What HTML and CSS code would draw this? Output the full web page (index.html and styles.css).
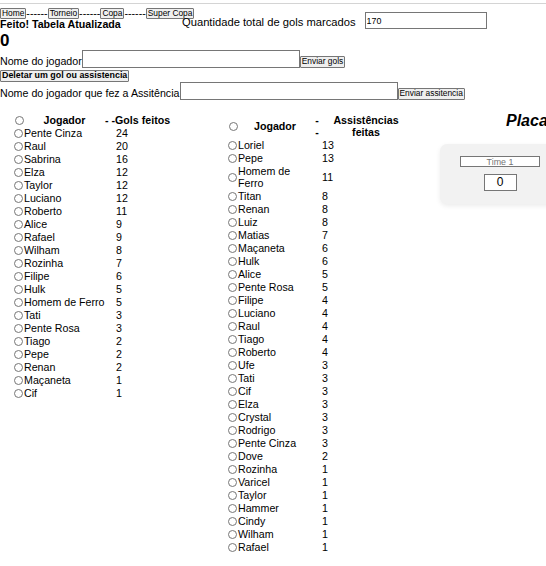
FILE: index.html
```html
<!DOCTYPE html>
<html lang="pt-BR">
<head>
<meta charset="utf-8">
<title>Tabela</title>
<link rel="stylesheet" href="styles.css">
</head>
<body>
<div class="topline"></div>
<header class="head">
  <nav class="nav"><button class="btn">Home</button>------<button class="btn">Torneio</button>------<button class="btn">Copa</button>------<button class="btn">Super Copa</button></nav>
  <div class="total"><label class="total-label">Quantidade total de gols marcados</label><input class="total-input" value="170"></div>
  <p class="status">Feito! Tabela Atualizada</p>
  <h2 class="zero">0</h2>
</header>

<div class="field"><label class="field-label">Nome do jogador</label><input class="field-input"><button class="btn">Enviar gols</button></div>
<button class="btn btn-delete">Deletar um gol ou assistencia</button>
<div class="field field-tight"><label class="field-label">Nome do jogador que fez a Assitência</label><input class="field-input"><button class="btn">Enviar assitencia</button></div>

<main class="boards">
  <table class="board board-gols">
    <thead>
      <tr><th class="c-r"><input type="radio" class="radio" name="g"></th><th class="c-n">Jogador</th><th class="c-v">- -Gols feitos</th></tr>
    </thead>
    <tbody>
      <tr><td class="c-r"><input type="radio" class="radio" name="g"></td><td class="c-n">Pente Cinza</td><td class="c-v">24</td></tr>
      <tr><td class="c-r"><input type="radio" class="radio" name="g"></td><td class="c-n">Raul</td><td class="c-v">20</td></tr>
      <tr><td class="c-r"><input type="radio" class="radio" name="g"></td><td class="c-n">Sabrina</td><td class="c-v">16</td></tr>
      <tr><td class="c-r"><input type="radio" class="radio" name="g"></td><td class="c-n">Elza</td><td class="c-v">12</td></tr>
      <tr><td class="c-r"><input type="radio" class="radio" name="g"></td><td class="c-n">Taylor</td><td class="c-v">12</td></tr>
      <tr><td class="c-r"><input type="radio" class="radio" name="g"></td><td class="c-n">Luciano</td><td class="c-v">12</td></tr>
      <tr><td class="c-r"><input type="radio" class="radio" name="g"></td><td class="c-n">Roberto</td><td class="c-v">11</td></tr>
      <tr><td class="c-r"><input type="radio" class="radio" name="g"></td><td class="c-n">Alice</td><td class="c-v">9</td></tr>
      <tr><td class="c-r"><input type="radio" class="radio" name="g"></td><td class="c-n">Rafael</td><td class="c-v">9</td></tr>
      <tr><td class="c-r"><input type="radio" class="radio" name="g"></td><td class="c-n">Wilham</td><td class="c-v">8</td></tr>
      <tr><td class="c-r"><input type="radio" class="radio" name="g"></td><td class="c-n">Rozinha</td><td class="c-v">7</td></tr>
      <tr><td class="c-r"><input type="radio" class="radio" name="g"></td><td class="c-n">Filipe</td><td class="c-v">6</td></tr>
      <tr><td class="c-r"><input type="radio" class="radio" name="g"></td><td class="c-n">Hulk</td><td class="c-v">5</td></tr>
      <tr><td class="c-r"><input type="radio" class="radio" name="g"></td><td class="c-n">Homem de Ferro</td><td class="c-v">5</td></tr>
      <tr><td class="c-r"><input type="radio" class="radio" name="g"></td><td class="c-n">Tati</td><td class="c-v">3</td></tr>
      <tr><td class="c-r"><input type="radio" class="radio" name="g"></td><td class="c-n">Pente Rosa</td><td class="c-v">3</td></tr>
      <tr><td class="c-r"><input type="radio" class="radio" name="g"></td><td class="c-n">Tiago</td><td class="c-v">2</td></tr>
      <tr><td class="c-r"><input type="radio" class="radio" name="g"></td><td class="c-n">Pepe</td><td class="c-v">2</td></tr>
      <tr><td class="c-r"><input type="radio" class="radio" name="g"></td><td class="c-n">Renan</td><td class="c-v">2</td></tr>
      <tr><td class="c-r"><input type="radio" class="radio" name="g"></td><td class="c-n">Maçaneta</td><td class="c-v">1</td></tr>
      <tr><td class="c-r"><input type="radio" class="radio" name="g"></td><td class="c-n">Cif</td><td class="c-v">1</td></tr>
    </tbody>
  </table>

  <table class="board board-assist">
    <thead>
      <tr><th class="c-r"><input type="radio" class="radio" name="a"></th><th class="c-n">Jogador</th><th class="c-d">- -</th><th class="c-v">Assistências feitas</th></tr>
    </thead>
    <tbody>
      <tr><td class="c-r"><input type="radio" class="radio" name="a"></td><td class="c-n">Loriel</td><td class="c-d"></td><td class="c-v">13</td></tr>
      <tr><td class="c-r"><input type="radio" class="radio" name="a"></td><td class="c-n">Pepe</td><td class="c-d"></td><td class="c-v">13</td></tr>
      <tr><td class="c-r"><input type="radio" class="radio" name="a"></td><td class="c-n">Homem de Ferro</td><td class="c-d"></td><td class="c-v">11</td></tr>
      <tr><td class="c-r"><input type="radio" class="radio" name="a"></td><td class="c-n">Titan</td><td class="c-d"></td><td class="c-v">8</td></tr>
      <tr><td class="c-r"><input type="radio" class="radio" name="a"></td><td class="c-n">Renan</td><td class="c-d"></td><td class="c-v">8</td></tr>
      <tr><td class="c-r"><input type="radio" class="radio" name="a"></td><td class="c-n">Luiz</td><td class="c-d"></td><td class="c-v">8</td></tr>
      <tr><td class="c-r"><input type="radio" class="radio" name="a"></td><td class="c-n">Matias</td><td class="c-d"></td><td class="c-v">7</td></tr>
      <tr><td class="c-r"><input type="radio" class="radio" name="a"></td><td class="c-n">Maçaneta</td><td class="c-d"></td><td class="c-v">6</td></tr>
      <tr><td class="c-r"><input type="radio" class="radio" name="a"></td><td class="c-n">Hulk</td><td class="c-d"></td><td class="c-v">6</td></tr>
      <tr><td class="c-r"><input type="radio" class="radio" name="a"></td><td class="c-n">Alice</td><td class="c-d"></td><td class="c-v">5</td></tr>
      <tr><td class="c-r"><input type="radio" class="radio" name="a"></td><td class="c-n">Pente Rosa</td><td class="c-d"></td><td class="c-v">5</td></tr>
      <tr><td class="c-r"><input type="radio" class="radio" name="a"></td><td class="c-n">Filipe</td><td class="c-d"></td><td class="c-v">4</td></tr>
      <tr><td class="c-r"><input type="radio" class="radio" name="a"></td><td class="c-n">Luciano</td><td class="c-d"></td><td class="c-v">4</td></tr>
      <tr><td class="c-r"><input type="radio" class="radio" name="a"></td><td class="c-n">Raul</td><td class="c-d"></td><td class="c-v">4</td></tr>
      <tr><td class="c-r"><input type="radio" class="radio" name="a"></td><td class="c-n">Tiago</td><td class="c-d"></td><td class="c-v">4</td></tr>
      <tr><td class="c-r"><input type="radio" class="radio" name="a"></td><td class="c-n">Roberto</td><td class="c-d"></td><td class="c-v">4</td></tr>
      <tr><td class="c-r"><input type="radio" class="radio" name="a"></td><td class="c-n">Ufe</td><td class="c-d"></td><td class="c-v">3</td></tr>
      <tr><td class="c-r"><input type="radio" class="radio" name="a"></td><td class="c-n">Tati</td><td class="c-d"></td><td class="c-v">3</td></tr>
      <tr><td class="c-r"><input type="radio" class="radio" name="a"></td><td class="c-n">Cif</td><td class="c-d"></td><td class="c-v">3</td></tr>
      <tr><td class="c-r"><input type="radio" class="radio" name="a"></td><td class="c-n">Elza</td><td class="c-d"></td><td class="c-v">3</td></tr>
      <tr><td class="c-r"><input type="radio" class="radio" name="a"></td><td class="c-n">Crystal</td><td class="c-d"></td><td class="c-v">3</td></tr>
      <tr><td class="c-r"><input type="radio" class="radio" name="a"></td><td class="c-n">Rodrigo</td><td class="c-d"></td><td class="c-v">3</td></tr>
      <tr><td class="c-r"><input type="radio" class="radio" name="a"></td><td class="c-n">Pente Cinza</td><td class="c-d"></td><td class="c-v">3</td></tr>
      <tr><td class="c-r"><input type="radio" class="radio" name="a"></td><td class="c-n">Dove</td><td class="c-d"></td><td class="c-v">2</td></tr>
      <tr><td class="c-r"><input type="radio" class="radio" name="a"></td><td class="c-n">Rozinha</td><td class="c-d"></td><td class="c-v">1</td></tr>
      <tr><td class="c-r"><input type="radio" class="radio" name="a"></td><td class="c-n">Varicel</td><td class="c-d"></td><td class="c-v">1</td></tr>
      <tr><td class="c-r"><input type="radio" class="radio" name="a"></td><td class="c-n">Taylor</td><td class="c-d"></td><td class="c-v">1</td></tr>
      <tr><td class="c-r"><input type="radio" class="radio" name="a"></td><td class="c-n">Hammer</td><td class="c-d"></td><td class="c-v">1</td></tr>
      <tr><td class="c-r"><input type="radio" class="radio" name="a"></td><td class="c-n">Cindy</td><td class="c-d"></td><td class="c-v">1</td></tr>
      <tr><td class="c-r"><input type="radio" class="radio" name="a"></td><td class="c-n">Wilham</td><td class="c-d"></td><td class="c-v">1</td></tr>
      <tr><td class="c-r"><input type="radio" class="radio" name="a"></td><td class="c-n">Rafael</td><td class="c-d"></td><td class="c-v">1</td></tr>
    </tbody>
  </table>

  <section class="placar">
    <h2 class="placar-title">Placar</h2>
    <div class="placar-box">
      <div class="team">
        <input class="team-name" placeholder="Time 1">
        <div class="team-score">0</div>
      </div>
    </div>
  </section>
</main>
</body>
</html>
```

FILE: styles.css
```css
html {
  overflow: hidden;
}

body {
  margin: 0;
  font-family: "Liberation Sans", Arial, sans-serif;
  font-size: 10.67px;
  line-height: 12px;
  color: #000;
  background: #fff;
}

.topline {
  height: 3px;
  border-bottom: 1px solid #d4d4d4;
}

.btn {
  font-family: "Liberation Sans", Arial, sans-serif;
  font-size: 8.4px;
  line-height: 9px;
  height: 11px;
  padding: 0 1px;
  margin: 0;
  border: 1px solid #767676;
  border-radius: 1px;
  background: #efefef;
  color: #000;
}

.head {
  display: grid;
  grid-template-columns: 182px auto;
  margin-top: 3px;
}

.nav {
  grid-column: 1;
  grid-row: 1;
  display: flex;
  align-items: center;
  height: 12px;
  white-space: nowrap;
}

.total {
  grid-column: 2;
  grid-row: 1 / span 3;
  align-self: start;
  display: flex;
  align-items: flex-end;
  margin-top: 5px;
}

.total-label {
  font-size: 11.2px;
  line-height: 13px;
  margin-right: 9px;
  white-space: nowrap;
}

.total-input {
  box-sizing: border-box;
  width: 122px;
  height: 17px;
  margin: 0;
  padding: 0 1px;
  border: 1px solid #767676;
  font-family: "Liberation Sans", Arial, sans-serif;
  font-size: 8.9px;
}

.status {
  grid-column: 1;
  grid-row: 2;
  margin: 0;
  font-weight: bold;
  line-height: 11px;
  white-space: nowrap;
}

.zero {
  grid-column: 1;
  grid-row: 3;
  margin: 0.5px 0 0;
  font-size: 17px;
  line-height: 19px;
  font-weight: bold;
}

.field {
  display: flex;
  align-items: flex-end;
  margin-top: 0;
}

.field-label {
  line-height: 12px;
  margin-bottom: 1px;
  white-space: nowrap;
}

.field-input {
  box-sizing: border-box;
  width: 218px;
  height: 18px;
  margin: 0;
  padding: 0 1px;
  border: 1px solid #767676;
  font-family: "Liberation Sans", Arial, sans-serif;
  font-size: 8.9px;
}

.field .btn {
  height: 12px;
}

.btn-delete {
  display: block;
  margin-top: 2px;
  height: 12px;
  font-size: 8.9px;
  font-weight: bold;
}

.boards {
  display: flex;
  align-items: flex-start;
  margin-top: 13.5px;
}

.board {
  table-layout: fixed;
  border-collapse: separate;
  border-spacing: 0 1px;
  font-size: 10.67px;
  line-height: 12px;
  flex: none;
}

.board th,
.board td {
  padding: 0;
}

.board th {
  font-weight: bold;
  text-align: center;
  vertical-align: middle;
}

.board td {
  vertical-align: middle;
}

.c-r {
  width: 14px;
  line-height: 0;
}

.radio {
  width: 9px;
  height: 9px;
  margin: 0 0 0 4px;
  vertical-align: middle;
}

.board-gols {
  width: 162px;
  margin-left: 10px;
}

.board-gols .c-n {
  width: 81px;
  white-space: nowrap;
}

.board-gols th.c-v {
  width: 67px;
  text-align: left;
  white-space: nowrap;
}

.board-gols td.c-v {
  padding-left: 11px;
}

.board-assist {
  width: 186px;
  margin-left: 52px;
}

.board-assist .c-n {
  width: 74px;
}

.board-assist .c-d {
  width: 10px;
}

.board-assist .c-v {
  width: 88px;
}

.board-assist td.c-v {
  text-align: left;
}

.placar {
  flex: none;
  width: 180px;
  margin-left: 30px;
}

.placar-title {
  margin: 0;
  font-size: 16px;
  line-height: 16px;
  font-style: italic;
  font-weight: bold;
  text-align: center;
}

.placar-box {
  margin-top: 15px;
  height: 60px;
  box-sizing: border-box;
  padding: 12px 0 0 20px;
  background: #f2f2f2;
  border-radius: 7px;
  box-shadow: 0 2px 5px rgba(0, 0, 0, 0.08);
}

.team {
  width: 80px;
  display: flex;
  flex-direction: column;
  align-items: center;
  gap: 7px;
}

.team-name {
  box-sizing: border-box;
  width: 80px;
  height: 11px;
  margin: 0;
  padding: 0;
  border: 1px solid #767676;
  background: #fff;
  font-family: "Liberation Sans", Arial, sans-serif;
  font-size: 8.9px;
  text-align: center;
}

.team-name::placeholder {
  color: #757575;
}

.team-score {
  box-sizing: border-box;
  width: 33px;
  height: 17px;
  border: 1px solid #767676;
  background: #fff;
  font-size: 12px;
  line-height: 15px;
  text-align: center;
}
```
